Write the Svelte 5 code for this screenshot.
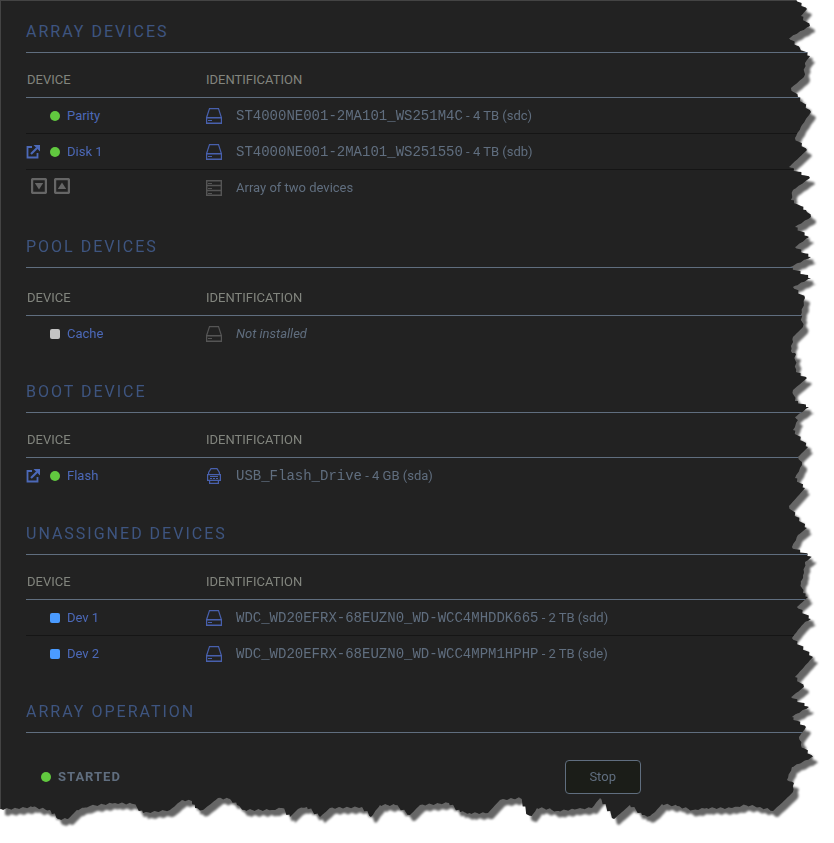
<script>
    const sections = [
        {
            title: 'Array Devices',
            rows: [
                { name: 'Parity', status: 'green', icon: 'disk', id: 'ST4000NE001-2MA101_WS251M4C', info: ' - 4 TB (sdc)' },
                { name: 'Disk 1', status: 'green', browse: true, icon: 'disk', id: 'ST4000NE001-2MA101_WS251550', info: ' - 4 TB (sdb)' },
                { total: true, icon: 'array', info: 'Array of two devices' }
            ]
        },
        {
            title: 'Pool Devices',
            tall: true,
            rows: [{ name: 'Cache', status: 'grey', icon: 'disk', off: true, info: 'Not installed' }]
        },
        {
            title: 'Boot Device',
            rows: [{ name: 'Flash', status: 'green', browse: true, icon: 'usb', id: 'USB_Flash_Drive', info: ' - 4 GB (sda)' }]
        },
        {
            title: 'Unassigned Devices',
            rows: [
                { name: 'Dev 1', status: 'blue', icon: 'disk', id: 'WDC_WD20EFRX-68EUZN0_WD-WCC4MHDDK665', info: ' - 2 TB (sdd)' },
                { name: 'Dev 2', status: 'blue', icon: 'disk', id: 'WDC_WD20EFRX-68EUZN0_WD-WCC4MPM1HPHP', info: ' - 2 TB (sde)' }
            ]
        }
    ];

    // torn paper edge: [x, y] down the right side, then back along the bottom
    const W = 834;
    const H = 820;
    const right = [
        [796, 0], [807, 9], [801, 16], [810, 26], [789, 38], [800, 48], [810, 56], [805, 63], [804, 77], [791, 88],
        [798, 97], [811, 112], [802, 125], [795, 138], [807, 150], [789, 167], [810, 178], [793, 190], [791, 200],
        [799, 205], [806, 210], [811, 217], [795, 227], [809, 237], [795, 247], [811, 257], [790, 267], [811, 278],
        [793, 287], [805, 298], [801, 315], [803, 327], [793, 337], [791, 351], [795, 353], [796, 372], [807, 378],
        [793, 390], [795, 401], [809, 407], [795, 417], [798, 420], [793, 430], [808, 447], [798, 457], [802, 465],
        [795, 478], [805, 488], [799, 495], [789, 506], [797, 517], [807, 528], [798, 535], [792, 547], [812, 557],
        [805, 562], [804, 573], [801, 583], [803, 593], [808, 597], [797, 607], [811, 619], [805, 622], [798, 630],
        [792, 638], [813, 657], [795, 677], [804, 687], [791, 697], [809, 707], [791, 717], [806, 727], [799, 737],
        [801, 745], [813, 757], [792, 767], [787, 780], [794, 783], [793, 792], [785, 800]
    ];
    const bottom = [
        [773, 811], [760, 807], [745, 805], [732, 808], [707, 808], [693, 810], [677, 806], [662, 804], [655, 812],
        [650, 816], [642, 815], [630, 805], [622, 812], [614, 819], [600, 798], [592, 808], [577, 809], [557, 811],
        [543, 808], [537, 808], [532, 816], [528, 815], [520, 798], [500, 800], [488, 813], [470, 813], [460, 812],
        [449, 803], [420, 805], [410, 815], [395, 805], [380, 805], [371, 817], [362, 807], [330, 808], [320, 817],
        [307, 807], [298, 809], [290, 817], [282, 808], [272, 810], [245, 810], [237, 805], [230, 799], [218, 798],
        [203, 810], [195, 808], [192, 801], [182, 800], [170, 810], [143, 813], [133, 804], [115, 803], [90, 806],
        [77, 810], [68, 819], [58, 819], [50, 810], [32, 807], [10, 809], [0, 809]
    ];

    // add small teeth between the main points
    function roughen(points) {
        const out = [];
        points.forEach(([x, y], i) => {
            out.push([x, y]);
            const next = points[i + 1];
            if (!next) return;
            const steps = Math.floor(Math.hypot(next[0] - x, next[1] - y) / 2);
            for (let s = 1; s < steps; s++) {
                const t = s / steps;
                const j = ((i * 7 + s * 5) % 4) - 1.5;
                out.push([x + (next[0] - x) * t + j * 0.6, y + (next[1] - y) * t - j * 0.6]);
            }
        });
        return out;
    }

    const tear = [[0, 0], ...roughen([...right, ...bottom])]
        .map(([x, y]) => `${((x / W) * 100).toFixed(2)}% ${((y / H) * 100).toFixed(2)}%`)
        .join(', ');
</script>

<div class="paper">
    <main style:clip-path="polygon({tear})">
        {#each sections as section}
            <section>
                <h2>{section.title}</h2>
                <table class:tall={section.tall}>
                    <thead>
                        <tr>
                            <th class="device">Device</th>
                            <th>Identification</th>
                        </tr>
                    </thead>
                    <tbody>
                        {#each section.rows as row}
                            <tr class:total={row.total}>
                                <td>
                                    {#if row.total}
                                        <div class="toggles">
                                            <button aria-label="Spin down">
                                                <svg width="16" height="16" viewBox="0 0 16 16">
                                                    <rect x="1" y="1" width="14" height="14" rx="1.5" fill="none" stroke="currentColor" stroke-width="2.4" />
                                                    <path d="M3.8 5h8.4L8 11.5z" fill="currentColor" />
                                                </svg>
                                            </button>
                                            <button aria-label="Spin up">
                                                <svg width="16" height="16" viewBox="0 0 16 16">
                                                    <rect x="1" y="1" width="14" height="14" rx="1.5" fill="none" stroke="currentColor" stroke-width="2.4" />
                                                    <path d="M3.8 11h8.4L8 4.5z" fill="currentColor" />
                                                </svg>
                                            </button>
                                        </div>
                                    {:else}
                                        <div class="name">
                                            <span class="browse">
                                                {#if row.browse}
                                                    <a href="#browse" aria-label="Browse {row.name}">
                                                        <svg width="14" height="14" viewBox="0 0 14 14" fill="none" stroke="currentColor" stroke-width="1.8">
                                                            <path d="M6 2H1.5v10.5h10V8" />
                                                            <path d="M5 9l6-6" stroke-width="2.2" />
                                                            <path d="M7.5 0H14v6.5z" fill="currentColor" stroke="none" />
                                                        </svg>
                                                    </a>
                                                {/if}
                                            </span>
                                            <i class="orb {row.status}"></i>
                                            <a href="#device">{row.name}</a>
                                        </div>
                                    {/if}
                                </td>
                                <td>
                                    <div class="ident" class:off={row.off || row.total}>
                                        <svg width="16" height="16" viewBox="0 0 16 16" fill="none" stroke="currentColor">
                                            {#if row.icon === 'disk'}
                                                <path d="M.6 9.5L3.5.6h9l2.9 8.9v6H.6z" stroke-width="1.2" />
                                                <path d="M0 9.8h16M0 15.2h16" stroke-width="1.6" />
                                                <path d="M2 12.5h4" />
                                            {:else if row.icon === 'usb'}
                                                <path d="M2.6 6.5V4.5L5 .6h6l2.4 3.9v2" stroke-width="1.2" />
                                                <path d="M1.6 6.6h12.8v5.8H1.6zM3.6 12.5v2.9h8.8v-2.9" stroke-width="1.2" />
                                                <path d="M4 8.5h8M4 10.5h2M7 10.5h2M10 10.5h2M4 12.5h8" />
                                            {:else}
                                                <path d="M.7.7h14.6v14.6H.7zM.5 5.5h15M.5 10.5h15" stroke-width="1.4" />
                                                <path d="M2 3.5h4M2 8.5h4M2 13.5h4" />
                                            {/if}
                                        </svg>
                                        <span class="text" class:missing={row.off}>{#if row.id}<span class="mono">{row.id}</span>{/if}{row.info}</span>
                                    </div>
                                </td>
                            </tr>
                        {/each}
                    </tbody>
                </table>
            </section>
        {/each}

        <section>
            <h2>Array Operation</h2>
            <div class="operation">
                <div class="status"><i class="orb green"></i><b>STARTED</b></div>
                <div><button class="stop">Stop</button></div>
            </div>
        </section>
    </main>
</div>

<style>
    :global(body) {
        margin: 0;
        background: #fff;
    }

    .paper {
        padding-bottom: 20px;
        filter: drop-shadow(5px 6px 1px rgba(0, 0, 0, 0.6));
    }

    main {
        box-sizing: border-box;
        padding: 21px 0 26px 25px;
        border-top: 1px solid #444;
        border-left: 1px solid #444;
        background: #222;
        color: #606e7f;
        font: 13px/18px Roboto, "Liberation Sans", sans-serif;
        display: flex;
        flex-direction: column;
        gap: 30px;
    }

    h2 {
        margin: 0;
        padding-bottom: 10px;
        border-bottom: 1px solid #606e7f;
        color: #3e5580;
        font-size: 16px;
        line-height: 20px;
        font-weight: 400;
        letter-spacing: 2px;
        text-transform: uppercase;
    }

    table {
        width: 100%;
        border-spacing: 0;
        table-layout: fixed;
    }

    th {
        box-sizing: border-box;
        height: 45px;
        padding: 10px 0 0;
        border-bottom: 1px solid #606e7f;
        color: #82857e;
        font-weight: 400;
        text-align: left;
        text-transform: uppercase;
    }

    .tall th {
        height: 48px;
        padding-top: 12px;
    }

    th.device {
        width: 180px;
        padding-left: 1px;
    }

    td {
        box-sizing: border-box;
        height: 36px;
        padding: 0;
        border-bottom: 1px solid #151515;
    }

    tr:last-child td {
        border-bottom-color: transparent;
    }

    .total td {
        height: 37px;
    }

    .name,
    .ident,
    .toggles,
    .status {
        display: flex;
        align-items: center;
    }

    .browse {
        width: 24px;
    }

    a {
        color: #4c69b8;
        text-decoration: none;
    }

    svg {
        display: block;
        flex: none;
    }

    .orb {
        width: 10px;
        height: 10px;
        margin-right: 7px;
        border-radius: 2px;
    }

    .green {
        background: #61c93f;
        border-radius: 50%;
    }

    .grey {
        background: #c3c3c3;
    }

    .blue {
        background: #4a9bff;
    }

    .ident {
        gap: 14px;
    }

    .ident svg {
        color: #4860ad;
    }

    .off svg {
        color: #555;
    }

    .text {
        white-space: pre;
    }

    .mono {
        font-family: "Liberation Mono", monospace;
        font-size: 14px;
    }

    .missing {
        font-style: italic;
    }

    .toggles {
        gap: 7px;
        padding: 0 0 4px 5px;
    }

    .toggles button {
        padding: 0;
        border: none;
        background: none;
        color: #666;
        cursor: pointer;
    }

    .operation {
        display: grid;
        grid-template-columns: 2fr 1fr;
        align-items: center;
        padding-top: 27px;
    }

    .status {
        padding-left: 15px;
    }

    .status b {
        letter-spacing: 1px;
    }

    .stop {
        display: block;
        min-width: 76px;
        height: 34px;
        border: 1px solid #606e7f;
        border-radius: 4px;
        background: #1b1d18;
        color: #606e7f;
        font: inherit;
        cursor: pointer;
    }
</style>
